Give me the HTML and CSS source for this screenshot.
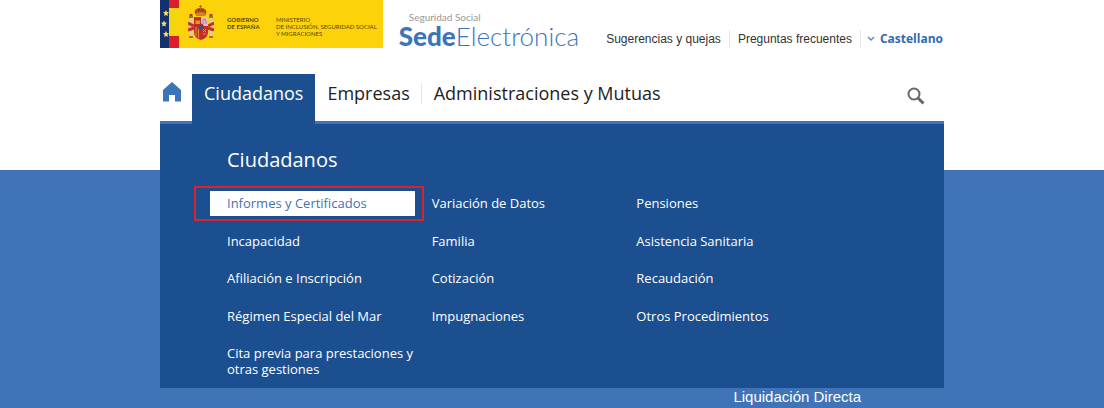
FILE: index.html
```html
<!DOCTYPE html>
<html lang="es">

<head>
  <meta charset="UTF-8">
  <meta name="viewport" content="width=device-width, initial-scale=1.0">
  <title>Sede Electrónica - Seguridad Social</title>
  <link rel="stylesheet" href="styles.css">
</head>

<body>
  <header class="header">
    <div class="top">
      <div class="gobierno">
        <svg class="flag" viewBox="0 0 19 48" width="19" height="48" aria-hidden="true">
          <rect width="19" height="48" fill="#f5d50d" />
          <rect width="9" height="48" fill="#15306f" />
          <rect x="9" width="10" height="8" fill="#d9202a" />
          <rect x="9" y="36" width="10" height="12" fill="#d9202a" />
          <g fill="#f0e36a">
            <path id="star" d="M6 10l.9 2.1 2.100.2-1.600 1.500.5 2.200L6 14.900l-1.900 1.100.5-2.200L3 12.300l2.100-.2z" />
            <use href="#star" x="-2" y="10.500" />
            <use href="#star" y="21" />
          </g>
        </svg>
        <svg class="crest" viewBox="0 0 26 36" width="26" height="36" aria-hidden="true">
          <!-- corona -->
          <path d="M8 10C5 6 8 3 12.500 3S20 6 17.500 10z" fill="#b9342b" />
          <path d="M8 8q4.500-2 9.500 0v3H8z" fill="#c98a1b" />
          <path d="M12.500 0v6M11 1.500h3M9 5l1.500 3M16.500 5L15 8" stroke="#a5691c" fill="none" />
          <!-- columnas -->
          <path d="M3 12v19M23 12v19" stroke="#d9c9b8" stroke-width="3" />
          <path d="M1 12h4M21 12h4M1 32h4M21 32h4" stroke="#a07432" stroke-width="2" />
          <path d="M0 18l6 3M0 25l6-2M26 18l-6 3M26 25l-6-2" stroke="#c72c2c" stroke-width="3" />
          <path d="M1.500 10h3M21.500 10h3" stroke="#b9342b" stroke-width="2" />
          <!-- escudo -->
          <path d="M6 12h14v15q0 6-7 8-7-2-7-8z" fill="#c52b2c" />
          <path d="M13 12h7v9h-7z" fill="#e8bfc5" />
          <path d="M15 19v-4l2-1 1 2v3" stroke="#b4689b" fill="none" />
          <path d="M7.500 19v-4h1v1h1v-1h1v1h1v-1h.5v4z" fill="#d49a28" />
          <path d="M8 22v9M10.500 22v11" stroke="#d49a28" />
          <path d="M15 24l3 3M18 24l-3 3M15 29h3" stroke="#d49a28" />
          <ellipse cx="13" cy="22" rx="2.500" ry="3" fill="#3d4f91" stroke="#b52730" />
        </svg>
        <p class="gobierno-name">GOBIERNO<br>DE ESPAÑA</p>
        <p class="ministerio">MINISTERIO<br>DE INCLUSIÓN, SEGURIDAD SOCIAL<br>Y MIGRACIONES</p>
      </div>
      <a class="sede" href="#">
        <span class="sede-small">Seguridad Social</span>
        <span class="sede-big"><b>Sede</b>Electrónica</span>
      </a>
      <ul class="tools">
        <li><a href="#">Sugerencias y quejas</a></li>
        <li><a href="#">Preguntas frecuentes</a></li>
        <li>
          <button class="lang" type="button">
            <svg viewBox="0 0 8 6" width="8" height="6" aria-hidden="true">
              <path d="M1 1l3 3 3-3" fill="none" stroke="#5f8cc4" stroke-width="1.500" />
            </svg>
            Castellano
          </button>
        </li>
      </ul>
    </div>

    <nav class="nav">
      <a class="home" href="#" aria-label="Inicio">
        <svg viewBox="0 0 18 20" width="18" height="20" aria-hidden="true">
          <path d="M9 0l9 8v11.500h-6V13H6v6.500H0V8z" fill="#3c74ba" />
        </svg>
      </a>
      <a class="tab active" href="#">Ciudadanos</a>
      <a class="tab" href="#">Empresas</a>
      <a class="tab" href="#">Administraciones y Mutuas</a>
      <button class="search" type="button" aria-label="Buscar">
        <svg viewBox="0 0 18 18" width="18" height="18" fill="none" stroke="#66676b" aria-hidden="true">
          <circle cx="7" cy="7" r="5.500" stroke-width="2" />
          <path d="M11 11l5.500 5.500" stroke-width="3" />
        </svg>
      </button>

      <div class="menu">
        <h2>Ciudadanos</h2>
        <ul class="menu-list">
          <li class="selected"><a href="#">Informes y Certificados</a></li>
          <li><a href="#">Variación de Datos</a></li>
          <li><a href="#">Pensiones</a></li>
          <li><a href="#">Incapacidad</a></li>
          <li><a href="#">Familia</a></li>
          <li><a href="#">Asistencia Sanitaria</a></li>
          <li><a href="#">Afiliación e Inscripción</a></li>
          <li><a href="#">Cotización</a></li>
          <li><a href="#">Recaudación</a></li>
          <li><a href="#">Régimen Especial del Mar</a></li>
          <li><a href="#">Impugnaciones</a></li>
          <li><a href="#">Otros Procedimientos</a></li>
          <li><a href="#">Cita previa para prestaciones y otras gestiones</a></li>
        </ul>
      </div>
    </nav>
  </header>

  <main class="hero">
    <div class="hero-inner">
      <a href="#">Liquidación Directa</a>
    </div>
  </main>
</body>

</html>
```

FILE: styles.css
```css
* {
  box-sizing: border-box;
  margin: 0;
  padding: 0;
}

body {
  display: flex;
  flex-direction: column;
  min-height: 100vh;
  background: #fff;
  font-family: "Open Sans", sans-serif;
  font-size: 13px;
}

a {
  color: inherit;
  text-decoration: none;
}

ul {
  list-style: none;
}

button {
  border: 0;
  background: none;
  font: inherit;
  cursor: pointer;
}

svg {
  display: block;
}

.header {
  width: 100%;
  max-width: 784px;
  margin: 0 auto;
  padding-bottom: 46px;
}

/* cabecera */
.top {
  display: flex;
  height: 48px;
}

.gobierno {
  display: flex;
  background: #fcd20a;
  color: #5a4708;
  font-family: Lato, sans-serif;
  font-size: 6px;
  line-height: 7px;
  white-space: nowrap;
  padding-right: 6px;
}

.crest {
  margin: 5px 13px 0 9px;
}

.gobierno-name {
  width: 49px;
  padding-top: 16px;
  font-weight: 700;
}

.ministerio {
  padding-top: 16px;
}

.sede {
  display: flex;
  flex-direction: column;
  margin-left: 16px;
  padding-top: 10px;
  font-family: Lato, sans-serif;
  color: #3c74b8;
}

.sede-small {
  padding-left: 10px;
  font-size: 10px;
  line-height: 14px;
  color: #999;
}

.sede-big {
  font-size: 26px;
  line-height: 24px;
  font-weight: 300;
}

.sede-big b {
  font-weight: 900;
}

.tools {
  display: flex;
  align-items: center;
  margin-left: auto;
  padding-top: 30px;
  font-family: "Liberation Sans", sans-serif;
  font-size: 12px;
  line-height: 18px;
  color: #333;
  white-space: nowrap;
}

.tools li {
  padding: 0 8px;
}

.tools li + li {
  border-left: 1px solid #e6e6e6;
}

.tools li:last-child {
  padding: 0 1px 0 6px;
}

.lang {
  display: flex;
  align-items: center;
  gap: 5px;
  font-family: "Open Sans", sans-serif;
  font-weight: 700;
  color: #2f6bb5;
}

/* navegación */
.nav {
  position: relative;
  display: flex;
  margin-top: 26px;
  border-bottom: 3px solid #3f73b5;
  font-size: 18px;
  line-height: 38px;
  color: #222;
}

.home {
  width: 32px;
  padding: 8px 3px 0;
}

.tab {
  height: 47px;
  padding: 0 12px;
  white-space: nowrap;
}

.tab + .tab {
  background: linear-gradient(#e6e6e6, #e6e6e6) right 10px / 1px 20px no-repeat;
}

.tab:nth-child(4) {
  background: none;
}

.active {
  height: 50px;
  margin-bottom: -3px;
  background: #1c4f8f;
  color: #fff;
}

.search {
  margin-left: auto;
  padding: 0 19px 4px;
}

/* menú desplegable */
.menu {
  position: absolute;
  top: 50px;
  left: 0;
  right: 0;
  padding: 20px 50px 6px;
  background: #1c4f8f;
  color: #fff;
  font-size: 13px;
  line-height: 16px;
}

.menu h2 {
  padding-left: 17px;
  font-size: 20px;
  line-height: 32px;
  font-weight: 400;
}

.menu-list {
  display: grid;
  grid-template-columns: repeat(3, 1fr);
  align-content: space-between;
  max-width: 614px;
  min-height: 191px;
  margin-top: 15px;
}

.menu-list li {
  position: relative;
}

.menu-list a {
  display: block;
  padding: 4px 0 5px 17px;
}

.selected a {
  background: #fff;
  color: #3f73b5;
}

.selected::after {
  content: "";
  position: absolute;
  inset: -5px -9px -5px -16px;
  border: 2px solid #d6262b;
}

/* contenido */
.hero {
  flex: 1;
  padding-top: 217px;
  background: #4074b6;
  color: #fff;
}

.hero-inner {
  max-width: 784px;
  margin: 0 auto;
  padding-right: 83px;
  text-align: right;
  font-family: "Liberation Sans", sans-serif;
  font-size: 15px;
  line-height: 20px;
}
```
